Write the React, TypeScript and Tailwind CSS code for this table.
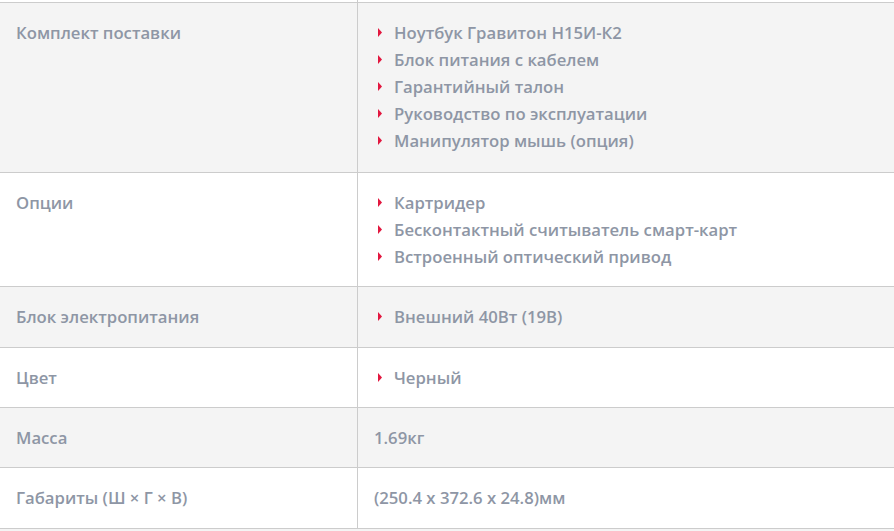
const rows: { label: string; items?: string[]; text?: string; pb: string }[] = [
  {
    label: 'Комплект поставки',
    items: [
      'Ноутбук Гравитон Н15И-К2',
      'Блок питания с кабелем',
      'Гарантийный талон',
      'Руководство по эксплуатации',
      'Манипулятор мышь (опция)',
    ],
    pb: 'pb-[18px]',
  },
  {
    label: 'Опции',
    items: ['Картридер', 'Бесконтактный считыватель смарт-карт', 'Встроенный оптический привод'],
    pb: 'pb-[16px]',
  },
  { label: 'Блок электропитания', items: ['Внешний 40Вт (19В)'], pb: 'pb-[17px]' },
  { label: 'Цвет', items: ['Черный'], pb: 'pb-[16px]' },
  { label: 'Масса', text: '1.69кг', pb: 'pb-[16px]' },
  { label: 'Габариты (Ш × Г × В)', text: '(250.4 x 372.6 x 24.8)мм', pb: 'pb-[17px]' },
];

function Bullet() {
  return (
    <svg className="absolute left-[4px] top-[9px]" width="4" height="9" viewBox="0 0 4 9">
      <path d="M0 0 L4 4.5 L0 9 Z" fill="#e2173f" />
    </svg>
  );
}

export default function App() {
  return (
    <div
      className="w-[894px] h-[531px] bg-white overflow-hidden text-[16.7px] leading-[27px] font-semibold text-[#8e96a5]"
      style={{ fontFamily: '"Open Sans", "Noto Sans", sans-serif' }}
    >
      {/* tail of the previous row */}
      <div className="flex h-[2px]">
        <div className="w-[358px] border-r border-[#cccccc]" />
      </div>
      {rows.map((row, i) => (
        <div
          key={row.label}
          className={`flex border-t border-[#cccccc] ${i % 2 === 0 ? 'bg-[#f4f4f4]' : 'bg-white'}`}
        >
          <div className={`w-[358px] shrink-0 border-r border-[#cccccc] pl-4 pt-[16px] ${row.pb}`}>
            {row.label}
          </div>
          <div className={`flex-1 pl-4 pt-[16px] ${row.pb}`}>
            {row.items ? (
              <ul>
                {row.items.map((item) => (
                  <li key={item} className="relative pl-5">
                    <Bullet />
                    {item}
                  </li>
                ))}
              </ul>
            ) : (
              row.text
            )}
          </div>
        </div>
      ))}
      <div className="h-[4px] border-t border-[#cccccc] bg-[#f4f4f4]" />
    </div>
  );
}
